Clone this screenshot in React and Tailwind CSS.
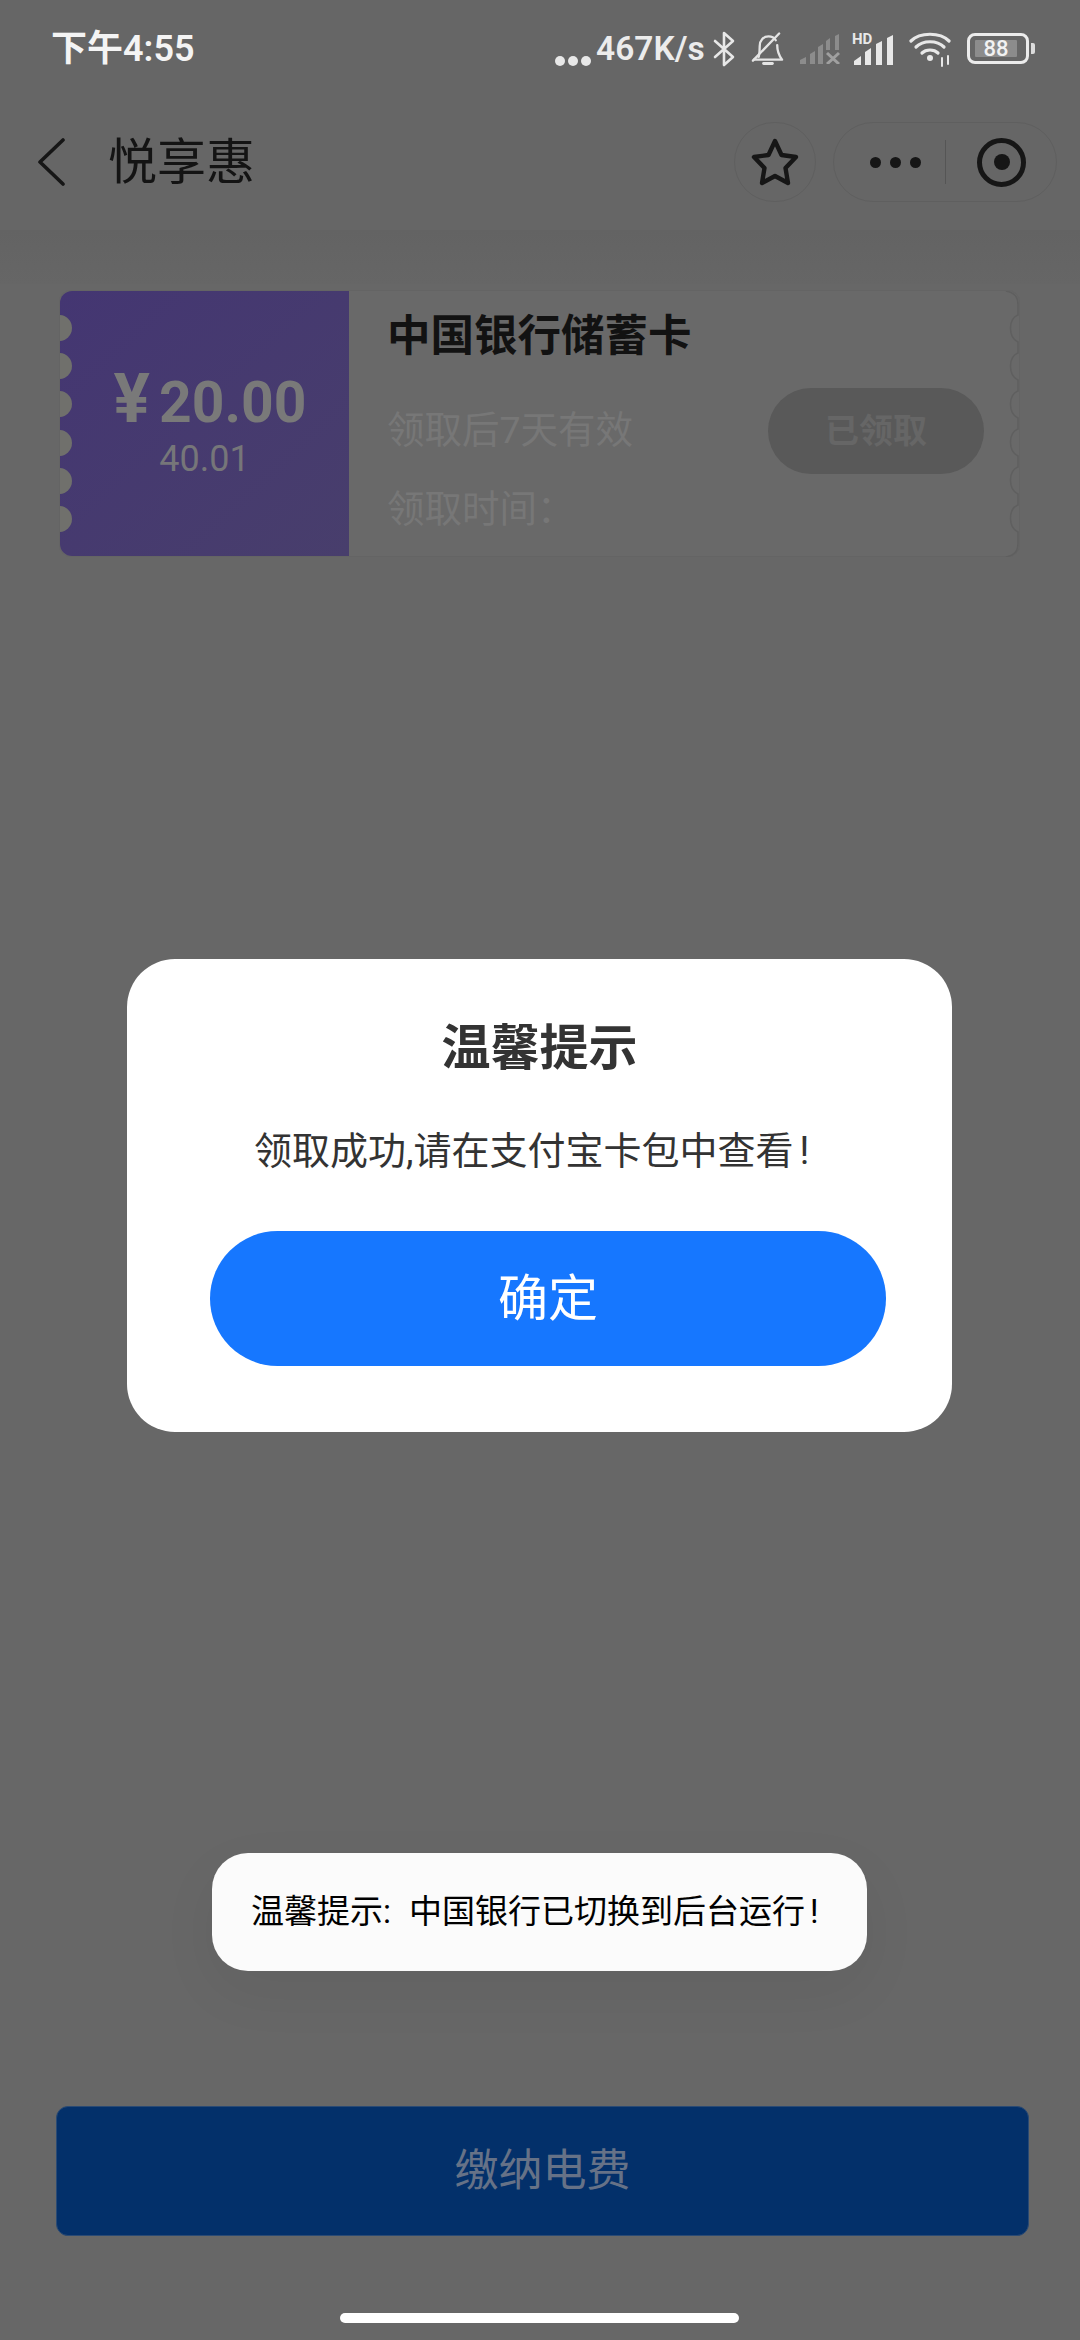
import React from 'react';

const sans = "font-['Roboto','Noto_Sans_CJK_SC',sans-serif]";

// status bar glyphs
const Bluetooth = () => (
  <svg width="22" height="36" viewBox="0 0 22 36" fill="none" stroke="#e8e8e8" strokeWidth="2.6" strokeLinejoin="round" strokeLinecap="round">
    <path d="M2 10 L20 26 L11 34 V2 L20 10 L2 26" />
  </svg>
);

const BellOff = () => (
  <svg width="33" height="36" viewBox="0 0 34 36" fill="none" stroke="#e4e4e4" strokeWidth="2.4" strokeLinecap="round" strokeLinejoin="round">
    <path d="M8 26 C9 22 9 18 9 15 C9 9 13 5 18 5 C21 5 24 6.5 25.5 9" />
    <path d="M27 14 C27 20 28 24 32 29 H3" />
    <path d="M13 33 H22" strokeWidth="3" />
    <path d="M2 30 L29 2" />
  </svg>
);

const SignalOff = () => (
  <svg width="41" height="30" viewBox="0 0 41 30" fill="#8c8c8c">
    <path d="M1 30 V26 L7 23 V30 Z" />
    <path d="M11 30 V20 L16 17 V30 Z" />
    <path d="M19 30 V13 L24 10 V30 Z" />
    <path d="M27 16 V7 L31 4 V16 Z" />
    <path d="M36 16 V2 L40 0 V16 Z" />
    <path d="M28 19 L40 30 M40 19 L28 30" stroke="#a0a0a0" strokeWidth="3" fill="none" />
  </svg>
);

const SignalHd = () => (
  <div className="relative w-[42px] h-[32px]">
    <svg className="absolute left-0 bottom-0" width="42" height="30" viewBox="0 0 42 30" fill="#e8e8e8">
      <path d="M2 30 V26 L9 21 V30 Z" />
      <path d="M13 30 V17 L19 13 V30 Z" />
      <path d="M24 30 V9 L30 6 V30 Z" />
      <path d="M35 30 V3 L41 0 V30 Z" />
    </svg>
    <span className="absolute left-0 top-0 text-[15px] leading-[12px] font-bold text-[#e8e8e8]">HD</span>
  </div>
);

const Wifi = () => (
  <svg width="42" height="36" viewBox="0 0 42 36" fill="none" stroke="#e8e8e8" strokeWidth="3.2" strokeLinecap="round">
    <path d="M2 10 C11 1 31 1 40 10" />
    <path d="M7 16 C14 9 28 9 35 16" />
    <path d="M13 22 C17 18 25 18 29 22" />
    <circle cx="21" cy="27" r="3" fill="#e8e8e8" stroke="none" />
    <path d="M33 27 V35 M39 25 V33" strokeWidth="2" />
  </svg>
);

const Battery = () => (
  <div className="flex items-center gap-[2px]">
    <div className="w-[62px] h-[31px] rounded-[8px] border-[3px] border-[#ececec] flex items-center p-[4px]">
      <div className="w-[42px] h-[17px] ml-[1px] rounded-[1px] bg-[#8c8c8c] flex items-center justify-center text-[22px] leading-none font-medium text-[#f2f2f2]">
        88
      </div>
    </div>
    <div className="w-[4px] h-[11px] rounded-r-[2px] bg-[#dcdcdc]" />
  </div>
);

const StatusBar = () => (
  <div className={`h-[96px] flex items-center justify-between pl-[51px] pr-[45px] pt-[1px] ${sans}`}>
    <span className="text-[36px] leading-none font-semibold text-[#f4f4f4]">下午4:55</span>
    <div className="flex items-center">
      <div className="flex gap-[3px] mt-[24px] mr-[5px]">
        <span className="w-[10px] h-[10px] rounded-full bg-[#e8e8e8]" />
        <span className="w-[10px] h-[10px] rounded-full bg-[#e8e8e8]" />
        <span className="w-[10px] h-[10px] rounded-full bg-[#e8e8e8]" />
      </div>
      <span className="w-[117px] text-[33.5px] leading-none font-semibold text-[#ececec]">467K/s</span>
      <Bluetooth />
      <div className="w-[16px]" />
      <BellOff />
      <div className="w-[15px]" />
      <SignalOff />
      <div className="w-[12px]" />
      <SignalHd />
      <div className="w-[15px]" />
      <Wifi />
      <div className="w-[16px]" />
      <Battery />
    </div>
  </div>
);

const NavBar = () => (
  <div className="h-[134px] shrink-0 flex items-start justify-between pt-[26px] pl-[37px] pr-[23px]">
    <div className="flex items-center h-[80px]">
      <svg width="28" height="48" viewBox="0 0 28 48" fill="none" stroke="#161616" strokeWidth="3.6" strokeLinecap="round" strokeLinejoin="round">
        <path d="M26 2 L3 24 L26 46" />
      </svg>
      <span className={`ml-[43px] text-[49px] leading-none text-[#141414] ${sans}`}>悦享惠</span>
    </div>
    <div className="flex items-center gap-[17px]">
      <div className="w-[82px] h-[80px] rounded-full border border-[#5f5f5f] flex items-center justify-center">
        <svg width="48" height="48" viewBox="0 0 48 48" fill="none" stroke="#161616" strokeWidth="4.4" strokeLinejoin="round">
          <path d="M24 3 L30.5 17 L45 19 L34.5 30 L37 45 L24 38 L11 45 L13.5 30 L3 19 L17.5 17 Z" />
        </svg>
      </div>
      <div className="w-[224px] h-[80px] rounded-full border border-[#5f5f5f] flex items-center">
        <div className="w-[111px] flex justify-end gap-[9px] pr-[24px]">
          <span className="w-[11px] h-[11px] rounded-full bg-[#161616]" />
          <span className="w-[11px] h-[11px] rounded-full bg-[#161616]" />
          <span className="w-[11px] h-[11px] rounded-full bg-[#161616]" />
        </div>
        <div className="w-px h-[44px] bg-[#555555]" />
        <div className="ml-[31px] w-[49px] h-[49px] rounded-full border-[5px] border-[#161616] flex items-center justify-center">
          <span className="w-[16px] h-[16px] rounded-full bg-[#161616]" />
        </div>
      </div>
    </div>
  </div>
);

// scalloped edge on the right of the coupon
const ScallopEdge = () => (
  <svg className="absolute right-[-2px] top-0" width="16" height="266" viewBox="0 0 16 266" fill="none" stroke="#5f5f5f" strokeWidth="1.5">
    <path d="M1 0 C10 2 13 6 13 14 V24 C3 28 3 46 13 51 V62 C3 66 3 84 13 89 V100 C3 104 3 122 13 127 V138 C3 142 3 160 13 165 V176 C3 180 3 198 13 203 V214 C3 218 3 236 13 241 V252 C13 260 10 264 1 266" />
  </svg>
);

const Coupon = () => (
  <div className={`relative ml-[59px] mr-[60px] mt-[6px] h-[267px] flex rounded-[12px] border border-[#646464] bg-[#696969] ${sans}`}>
    <div className="relative w-[289px] shrink-0 overflow-hidden rounded-l-[12px] bg-gradient-to-br from-[#443672] to-[#483e6c] flex flex-col items-center pt-[78px]">
      {[37, 75, 113, 152, 190, 228].map(y => (
        <span key={y} className="absolute left-[-14px] w-[26px] h-[26px] rounded-full bg-[#70706c]" style={{ top: y - 13 }} />
      ))}
      <div className="flex items-baseline ml-[11px] text-[#797979] font-bold">
        <span className="text-[68px] leading-[60px] mr-[9px]">¥</span>
        <span className="text-[57px] leading-[60px]">20.00</span>
      </div>
      <span className="text-[36px] leading-none mt-[8px] text-[#767679]">40.01</span>
    </div>
    <div className="flex-1 flex items-start justify-between pl-[38px] pr-[35px]">
      <div className="flex flex-col pt-[24px]">
        <span className="text-[43.5px] leading-none font-bold text-[#121212]">中国银行储蓄卡</span>
        <span className="mt-[53px] text-[37.5px] leading-none text-[#777777]">领取后7天有效</span>
        <span className="mt-[42px] text-[37.5px] leading-none text-[#777777]">领取时间：</span>
      </div>
      <div className="mt-[97px] w-[216px] h-[86px] rounded-full bg-[#595959] flex items-center justify-center text-[34px] font-bold text-[#666666]">
        已领取
      </div>
    </div>
    <ScallopEdge />
  </div>
);

const Dialog = () => (
  <div className={`absolute left-[127px] top-[959px] w-[825px] h-[473px] rounded-[48px] bg-white flex flex-col ${sans}`}>
    <h2 className="mt-[65px] text-[49px] leading-none font-bold text-center text-[#333333]">温馨提示</h2>
    <p className="mt-[59px] ml-[127px] text-[38px] leading-none text-[#333333] whitespace-nowrap">
      领取成功,请在支付宝卡包中查看<span className="ml-[6px]">!</span>
    </p>
    <button className="mt-[61px] ml-[83px] w-[676px] h-[135px] rounded-full bg-[#1677ff] text-[50px] leading-none text-white">确定</button>
  </div>
);

const Toast = () => (
  <div className={`absolute left-[212px] top-[1853px] w-[655px] h-[118px] pl-[39px] rounded-[36px] bg-[#fbfbfb] flex items-center shadow-[0_20px_60px_rgba(0,0,0,0.05)] text-[33px] text-black whitespace-nowrap ${sans}`}>
    温馨提示:<span className="ml-[18px]">中国银行已切换到后台运行</span><span className="ml-[5px]">!</span>
  </div>
);

export default function App() {
  return (
    <div className="relative w-[1080px] h-[2340px] overflow-hidden bg-[#676767] flex flex-col">
      <div className="bg-[#666666]">
        <StatusBar />
        <NavBar />
      </div>
      <div className="h-[54px] bg-gradient-to-b from-[#636363] to-[#666666]" />
      <Coupon />
      <div className="flex-1" />
      <div className={`mx-[56px] mb-[104px] w-[973px] h-[130px] rounded-[12px] bg-[#03306a] border border-[#2a4a74] flex items-center justify-center text-[44px] text-[#667287] ${sans}`}>
        缴纳电费
      </div>
      <Dialog />
      <Toast />
      <div className="absolute left-[340px] top-[2313px] w-[399px] h-[10px] rounded-full bg-white" />
    </div>
  );
}
